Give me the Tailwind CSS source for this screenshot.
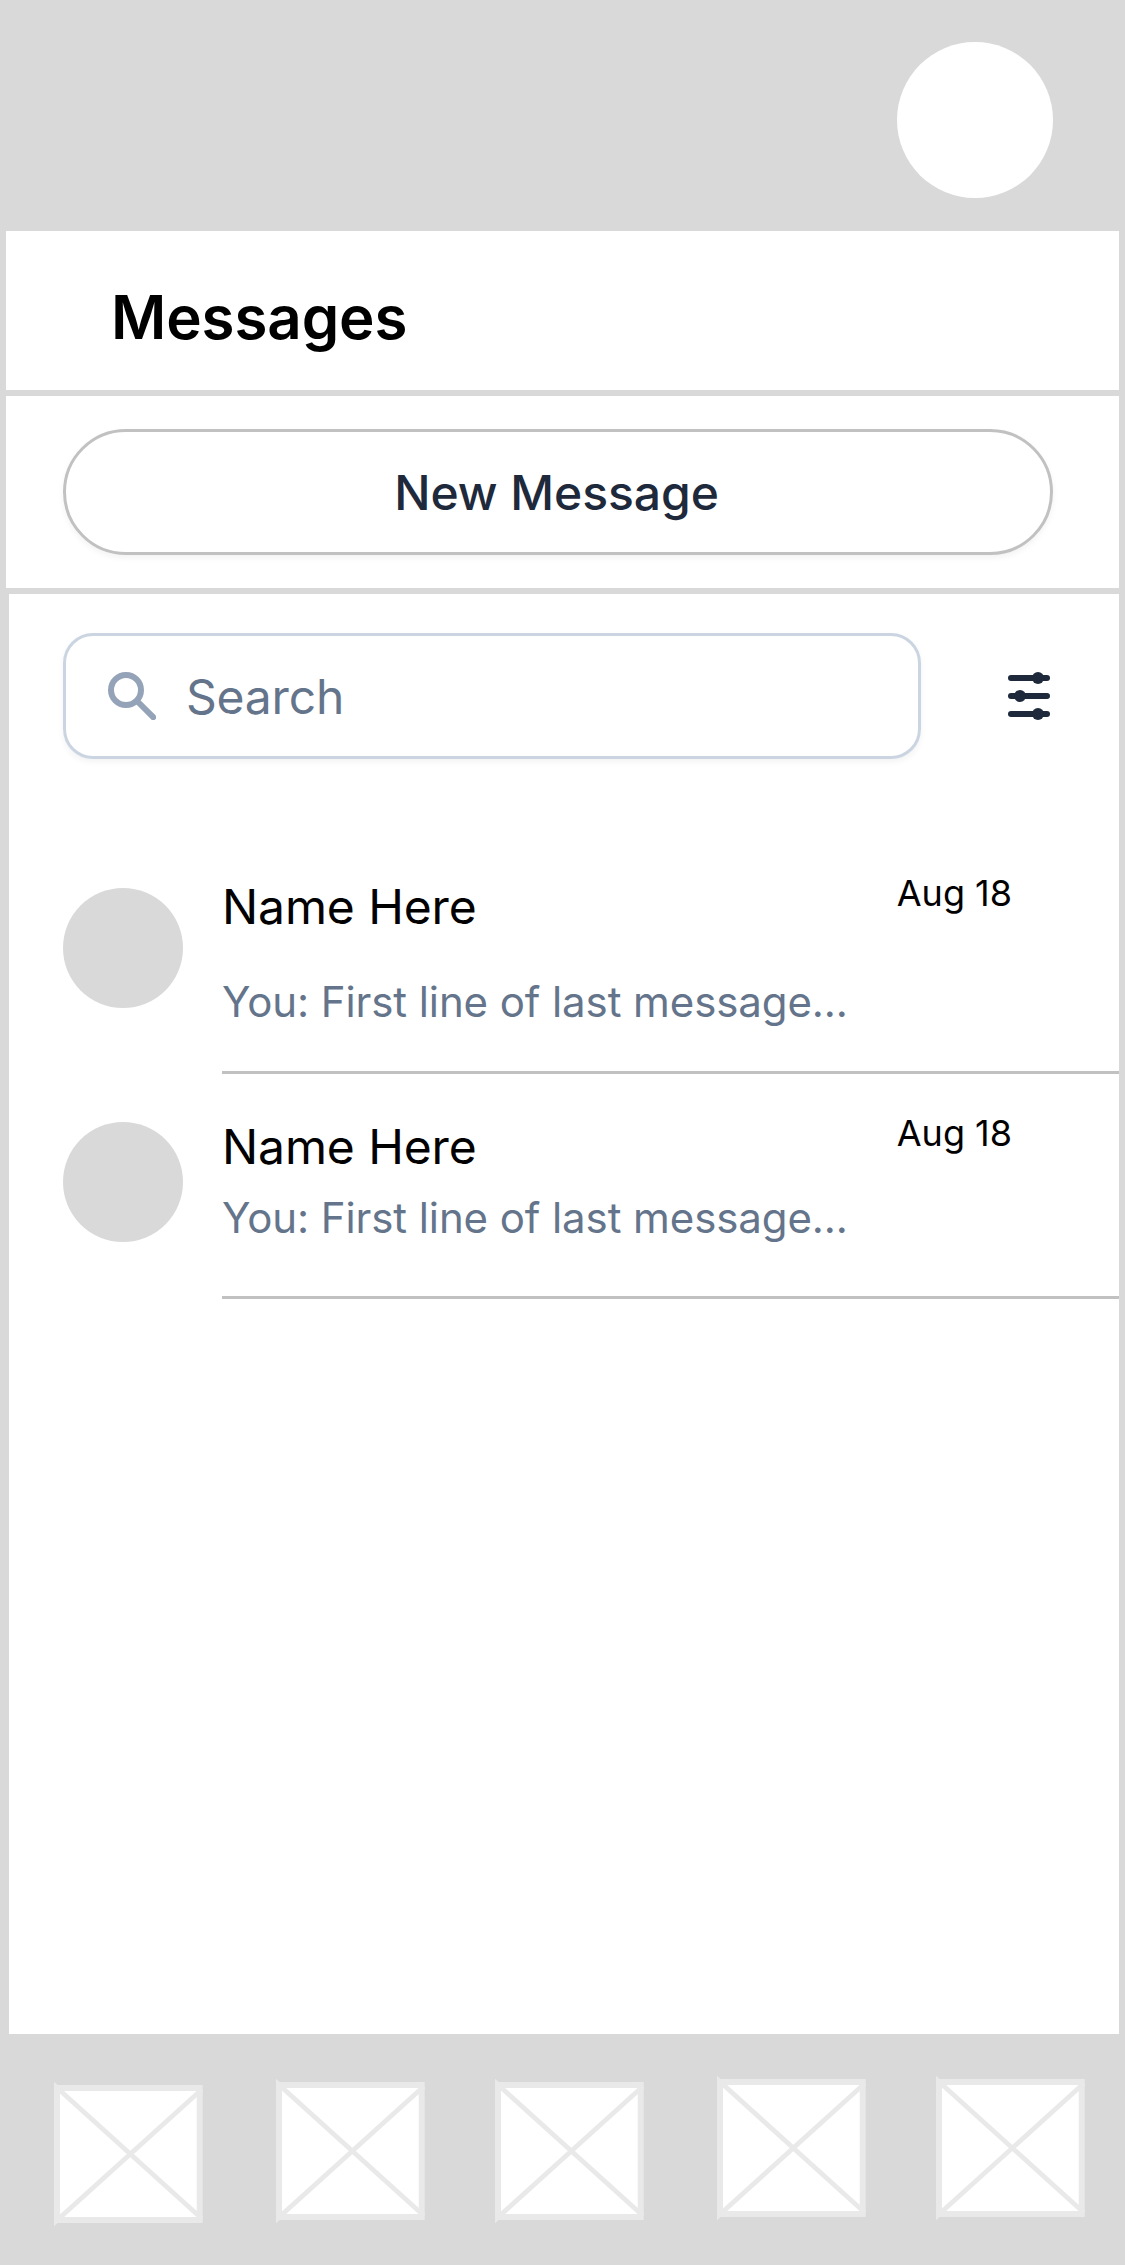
<!DOCTYPE html>
<html lang="en">
<head>
<meta charset="utf-8">
<title>Messages</title>
<script src="https://cdn.jsdelivr.net/npm/@tailwindcss/browser@4"></script>
</head>
<body class="flex h-[2265px] w-[1125px] flex-col overflow-hidden bg-[#d9d9d9] font-[Inter,sans-serif] text-black">
  <svg class="hidden">
    <symbol id="placeholder" viewBox="0 0 149 144">
      <rect x="3" y="6" width="142.7" height="132" fill="#fff" stroke="#e9e9e9" stroke-width="6"/>
      <path d="M-4 -0.6 L148 136.8 M-4 144.6 L148 7.2" stroke="#e9e9e9" stroke-width="4.8" fill="none"/>
    </symbol>
  </svg>

  <header class="flex h-[231px] shrink-0 justify-end pt-[42px] pr-[72px]">
    <div class="size-[156px] rounded-full bg-white"></div>
  </header>

  <section class="mx-[6px] h-[159px] shrink-0 bg-white pt-[50px] pl-[105px]">
    <h1 class="text-[60px] leading-[72px] font-semibold tracking-[-0.1px]">Messages</h1>
  </section>

  <section class="mx-[6px] mt-[6px] h-[192px] shrink-0 bg-white pt-[33px] pr-[66px] pl-[57px]">
    <button class="flex h-[126px] w-full items-center justify-center rounded-full border-[3px] border-[#c1c1c1] pt-[2px] pr-[3px] text-[48px] leading-[72px] font-medium tracking-[-0.05px] text-[#1e293b] shadow-[0_3px_6px_rgba(0,0,0,0.05)]">New Message</button>
  </section>

  <main class="mt-[6px] mr-[6px] ml-[9px] h-[1440px] shrink-0 bg-white pt-[39px]">
    <div class="flex items-center pl-[54px]">
      <div class="flex h-[126px] w-[858px] items-center rounded-[30px] border-[3px] border-[#cbd5e1] pl-[42px] shadow-[0_3px_6px_rgba(0,0,0,0.05)]">
        <svg class="size-[48px]" viewBox="0 0 48 48" fill="none" stroke="#94a3b8" stroke-width="6">
          <circle cx="18" cy="18" r="15"/>
          <path d="M29 29 L45.2 45.2" stroke-linecap="round"/>
        </svg>
        <span class="ml-[30px] pt-[2px] text-[48px] leading-[72px] tracking-[-0.2px] text-[#64748b]">Search</span>
      </div>
      <svg class="ml-[87px] h-[48px] w-[42px]" viewBox="0 0 42 48" fill="#1e293b">
        <rect y="3" width="42" height="6" rx="3"/><circle cx="30" cy="6" r="6"/>
        <rect y="21" width="42" height="6" rx="3"/><circle cx="12" cy="24" r="6"/>
        <rect y="39" width="42" height="6" rx="3"/><circle cx="30" cy="42" r="6"/>
      </svg>
    </div>

    <ul class="mt-[111px]">
      <li class="flex h-[204px] gap-[39px] pl-[54px]">
        <div class="mt-[18px] size-[120px] shrink-0 rounded-full bg-[#d9d9d9]"></div>
        <div class="flex grow justify-between border-b-[3px] border-[#c1c1c1] pr-[107px]">
          <div class="flex flex-col gap-[38px] pt-[7px]">
            <p class="text-[48px] leading-[60px] tracking-[-0.1px]">Name Here</p>
            <p class="text-[42px] leading-[54px] tracking-[-0.09px] text-[#64748b]">You: First line of last message...</p>
          </div>
          <time class="pt-[2px] text-[36px] leading-[42px]">Aug 18</time>
        </div>
      </li>
      <li class="mt-[36px] flex h-[189px] gap-[39px] pl-[54px]">
        <div class="mt-[12px] size-[120px] shrink-0 rounded-full bg-[#d9d9d9]"></div>
        <div class="flex grow justify-between border-b-[3px] border-[#c1c1c1] pr-[107px]">
          <div class="flex flex-col gap-[14px] pt-[7px]">
            <p class="text-[48px] leading-[60px] tracking-[-0.1px]">Name Here</p>
            <p class="text-[42px] leading-[54px] tracking-[-0.09px] text-[#64748b]">You: First line of last message...</p>
          </div>
          <time class="pt-[2px] text-[36px] leading-[42px]">Aug 18</time>
        </div>
      </li>
    </ul>
  </main>

  <nav class="flex items-start pl-[54px]">
    <svg class="mt-[48px] h-[144px] w-[149px]"><use href="#placeholder"/></svg>
    <svg class="mt-[45px] ml-[73px] h-[144px] w-[149px]"><use href="#placeholder"/></svg>
    <svg class="mt-[45px] ml-[70px] h-[144px] w-[149px]"><use href="#placeholder"/></svg>
    <svg class="mt-[42px] ml-[73px] h-[144px] w-[149px]"><use href="#placeholder"/></svg>
    <svg class="mt-[42px] ml-[70px] h-[144px] w-[149px]"><use href="#placeholder"/></svg>
  </nav>
</body>
</html>
